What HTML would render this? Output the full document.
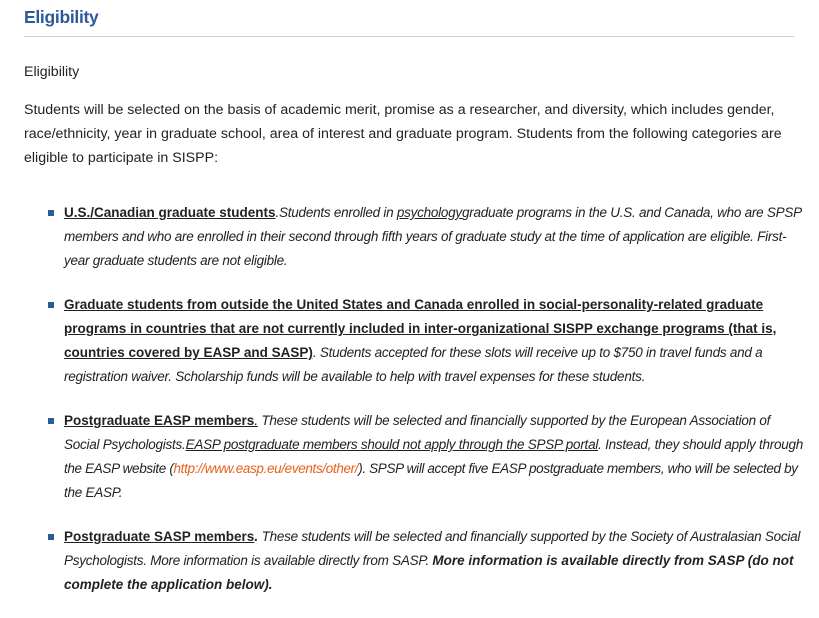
<!DOCTYPE html>
<html><head><meta charset="utf-8"><style>
body{margin:0;background:#fff;width:819px;height:618px;overflow:hidden;font-family:"Liberation Sans",sans-serif;color:#222;font-size:13.5px;letter-spacing:-0.25px}
h1{position:absolute;left:24px;top:7px;margin:0;font-size:17.5px;color:#2c5b9b;font-weight:bold;letter-spacing:-0.3px}
.rule{position:absolute;left:24px;top:36px;width:770px;height:1px;background:#d0d0d0}
.l{position:absolute;white-space:nowrap;line-height:24px}
.p{left:24px;font-size:14.2px;letter-spacing:0}
.b{left:64px;font-style:italic}
.sq{position:absolute;left:48px;width:6px;height:6px;background:#2c5b9b}
u{text-decoration:underline}
.bu{font-style:normal;font-weight:bold;text-decoration:underline;letter-spacing:0}
b{letter-spacing:0}
a{color:#e8601c;text-decoration:none}
</style></head><body>
<h1>Eligibility</h1>
<div class="rule"></div>
<div class="l p" style="top:60px">Eligibility</div>
<div class="l p" style="top:98px">Students will be selected on the basis of academic merit, promise as a researcher, and diversity, which includes gender,</div>
<div class="l p" style="top:122px">race/ethnicity, year in graduate school, area of interest and graduate program. Students from the following categories are</div>
<div class="l p" style="top:146px">eligible to participate in SISPP:</div>

<div class="sq" style="top:210px"></div>
<div class="l b" style="top:201px"><span class="bu">U.S./Canadian graduate students</span>.Students enrolled in <u>psychology</u>graduate programs in the U.S. and Canada, who are SPSP</div>
<div class="l b" style="top:225px">members and who are enrolled in their second through fifth years of graduate study at the time of application are eligible. First-</div>
<div class="l b" style="top:249px">year graduate students are not eligible.</div>

<div class="sq" style="top:302px"></div>
<div class="l b" style="top:293px"><span class="bu">Graduate students from outside the United States and Canada enrolled in social-personality-related graduate</span></div>
<div class="l b" style="top:317px"><span class="bu">programs in countries that are not currently included in inter-organizational SISPP exchange programs (that is,</span></div>
<div class="l b" style="top:341px"><span class="bu">countries covered by EASP and SASP)</span>. Students accepted for these slots will receive up to $750 in travel funds and a</div>
<div class="l b" style="top:365px">registration waiver. Scholarship funds will be available to help with travel expenses for these students.</div>

<div class="sq" style="top:418px"></div>
<div class="l b" style="top:409px"><span class="bu">Postgraduate EASP members</span><u>.</u> These students will be selected and financially supported by the European Association of</div>
<div class="l b" style="top:433px">Social Psychologists.<u>EASP postgraduate members should not apply through the SPSP portal</u>. Instead, they should apply through</div>
<div class="l b" style="top:457px;letter-spacing:-0.35px">the EASP website (<a>http://www.easp.eu/events/other/</a>). SPSP will accept five EASP postgraduate members, who will be selected by</div>
<div class="l b" style="top:481px">the EASP.</div>

<div class="sq" style="top:534px"></div>
<div class="l b" style="top:525px"><span class="bu">Postgraduate SASP members</span><b>.</b> These students will be selected and financially supported by the Society of Australasian Social</div>
<div class="l b" style="top:549px">Psychologists. More information is available directly from SASP. <b>More information is available directly from SASP (do not</b></div>
<div class="l b" style="top:573px"><b>complete the application below).</b></div>
</body></html>
